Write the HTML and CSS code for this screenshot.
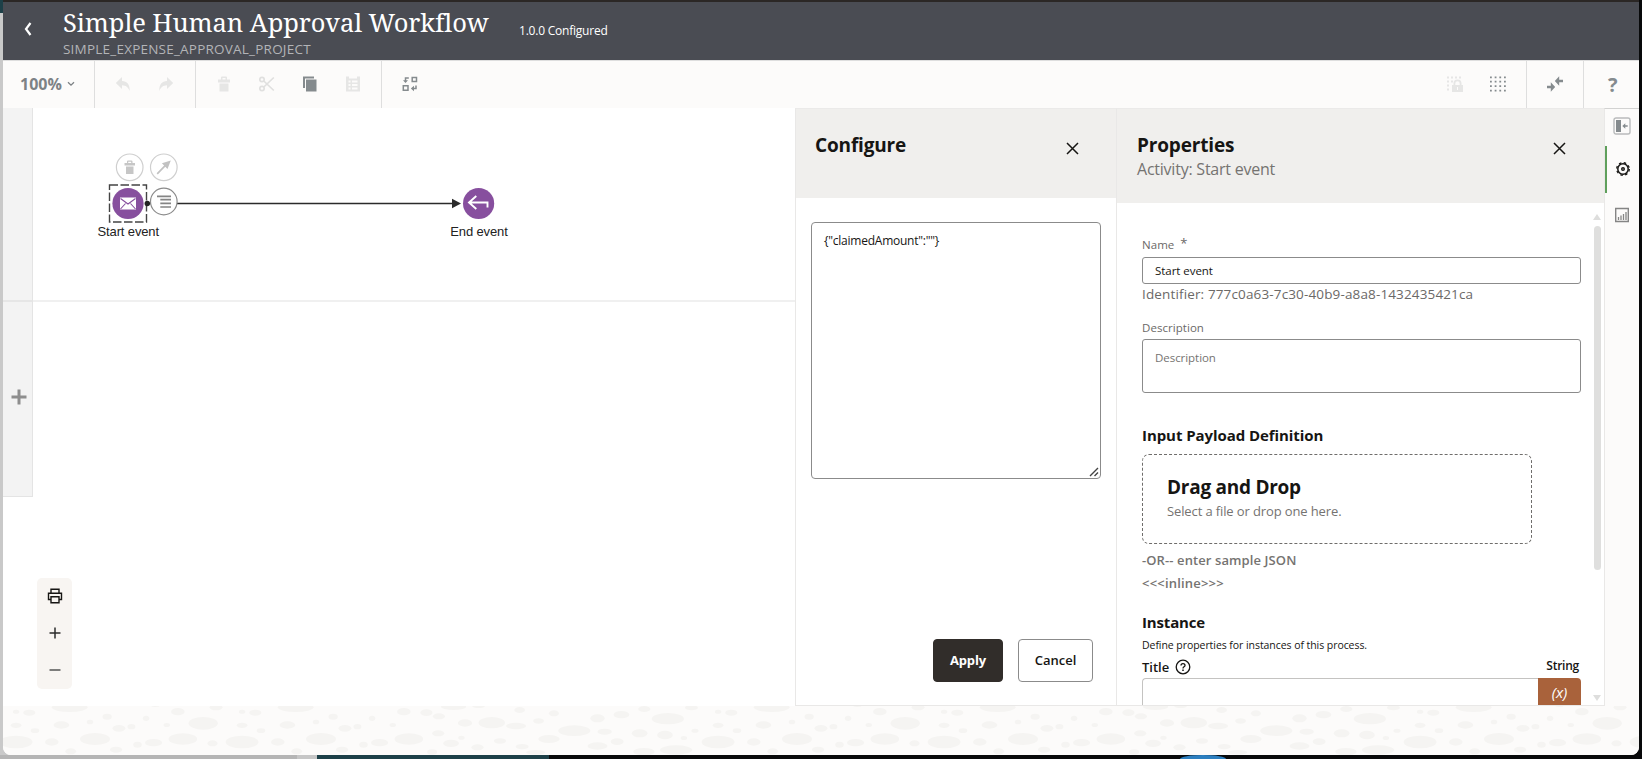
FILE: index.html
```html
<!DOCTYPE html>
<html lang="en">
<head>
<meta charset="utf-8">
<title>Simple Human Approval Workflow</title>
<link rel="stylesheet" href="styles.css">
</head>
<body>
<div class="desktop">
  <div class="window">
    <header class="header">
      <svg class="back" width="10" height="16" viewBox="0 0 10 16"><path d="M7.500 2 3 8l4.500 6" fill="none" stroke="#fff" stroke-width="2.200"/></svg>
      <div class="heading">
        <h1 class="title">Simple Human Approval Workflow</h1>
        <div class="project">SIMPLE_EXPENSE_APPROVAL_PROJECT</div>
      </div>
      <div class="version">1.0.0 Configured</div>
    </header>

    <div class="toolbar">
      <div class="group zoom-group">
        <span class="zoom">100%</span>
        <svg width="8" height="6" viewBox="0 0 8 6"><path d="M1 1.200 4 4.200l3-3" fill="none" stroke="#7d8285" stroke-width="1.300"/></svg>
      </div>
      <div class="group history-group">
        <svg class="off" width="16" height="16" viewBox="0 0 16 16"><path d="M7 1v4c5 .3 8 3.300 7.700 10C13 11 11 9.500 7 9.300V13L.8 7z"/></svg>
        <svg class="off" width="16" height="16" viewBox="0 0 16 16"><path d="M9 1v4C4 5.300 1 8.300 1.300 15 3 11 5 9.500 9 9.300V13l6.200-6z"/></svg>
      </div>
      <div class="group edit-group">
        <svg class="off" width="16" height="16" viewBox="0 0 16 16"><path d="M2 3.500h3V1.300Q5 .5 6 .5h4q1 0 1 .8v2.200h3v3H2zM6.500 2v1.500h3V2zM3.500 7.500h9v8h-9z" fill-rule="evenodd"/></svg>
        <svg class="off-line" width="16" height="16" viewBox="0 0 16 16"><circle cx="3" cy="3.500" r="2.200"/><circle cx="3" cy="12.500" r="2.200"/><path d="m4.800 5 10 9.500M4.800 11l10-9.500"/></svg>
        <svg class="on" width="16" height="16" viewBox="0 0 16 16"><path d="M1 .5h11v2H3V12H1zM4 3.500h10.500v12H4z"/></svg>
        <svg class="off" width="16" height="16" viewBox="0 0 16 16"><path d="M1 .5h3v2h8v-2h3v15H1zM3.500 4.500v2h2v-2zM7 4.500v2h5.500v-2zM3.500 8v2h2V8zM7 8v2h5.500V8zM3.500 11.500v2h2v-2zM7 11.500v2h5.500v-2z" fill-rule="evenodd"/></svg>
      </div>
      <div class="group swap-group">
        <svg width="16" height="16" viewBox="0 0 16 16"><g fill="none" stroke="#858b8e" stroke-width="1.500"><path d="M10.200 1.500h4.300v4h-4.300zM1.300 9.800H6v4.500H1.300zM6.800 2H3.500v3.500M14 9.500v3h-3.500"/></g><path d="M1 4.200h5L3.500 7zM12 9.800v5.400l-3.200-2.700z" fill="#858b8e"/></svg>
      </div>
      <div class="spacer"></div>
      <div class="group grid-group">
        <svg class="off" width="16" height="16" viewBox="0 0 16 16"><path d="M0 .5h2v2H0zM4 .5h2v2H4zM8 .5h2v2H8zM12 .5h2v2h-2zM0 4.500h2v2H0zM4 4.500h2v2H4zM0 8.500h2v2H0zM0 12.500h2v2H0z"/><path d="M5 9h1.500V7.500a4 4 0 0 1 8 0V9H16v7H5zM8.300 9h4.400V7.500a2.200 2.200 0 0 0-4.400 0zM10 11v3h1v-3z" fill-rule="evenodd"/></svg>
        <svg width="16" height="16" viewBox="0 0 16 16"><g stroke="#858b8e" stroke-width="1.800" stroke-dasharray="1.800 2.870"><path d="M0 1.300h16M0 5.700h16M0 10.200h16M0 14.700h16"/></g></svg>
      </div>
      <div class="group collapse-group">
        <svg class="on" width="16" height="16" viewBox="0 0 16 16"><path d="M7.800 5 12.200.3v3.500h3.800v2.400h-3.800v3.500zM8.200 11 3.800 6.300v3.500H0v2.400h3.800v3.500z"/></svg>
      </div>
      <div class="group help-group">?</div>
    </div>

    <main class="workspace">
      <section class="canvas">
        <div class="gutter">
          <div class="lane"></div>
          <div class="lane add-lane"><svg width="16" height="16" viewBox="0 0 16 16"><path d="M8 .5v15M.5 8h15" stroke="#8e8e8e" stroke-width="3"/></svg></div>
        </div>
        <div class="lanes"><div class="lane-body"></div></div>
        <svg class="diagram" width="792" height="190" viewBox="3 108 792 190">
          <path d="M147 203.500h306" stroke="#2b2b2b" stroke-width="1.500"/>
          <path d="m452 198.700 9 4.800-9 4.800z" fill="#2b2b2b"/>
          <rect x="109.500" y="185" width="37" height="37" fill="none" stroke="#444" stroke-width="1.400" stroke-dasharray="8.500 2.500"/>
          <circle cx="128" cy="203.500" r="15.600" fill="#874f9e"/>
          <rect x="120" y="197.500" width="16" height="12" fill="#fff"/>
          <path d="m120.500 198.500 7.500 5.500 7.500-5.500M120.500 209l5-5.500M135.500 209l-5-5.500" fill="none" stroke="#874f9e" stroke-width="1.100"/>
          <circle cx="147.300" cy="203.500" r="2.700" fill="#222"/>
          <g fill="#fff" stroke="#cfcfcf" stroke-width="1.200"><circle cx="129.700" cy="167.300" r="13.300"/><circle cx="163.800" cy="167.300" r="13.300"/><circle cx="163.800" cy="201.500" r="13.300" stroke="#8b8b8b"/></g>
          <path d="M124.500 163h2.500v-1.500q0-1 1-1h3.500q1 0 1 1v1.500h2.500v2.500h-10.500zm3.700-1.300v1.300h3v-1.300zM126 166.500h7.500v7.500H126z" fill="#c6c6c6" fill-rule="evenodd"/>
          <path d="m170.800 160.500-3.300 8.500-2.200-2.300-7.500 7.700-1.200-1.200 7.500-7.600-2.200-2.300z" fill="#c2c2c2"/>
          <path d="M157 196.300h14M160.300 199.700H171M160.300 203.300H171M160.300 207H171" stroke="#858585" stroke-width="1.700"/>
          <circle cx="478.600" cy="203.500" r="15.600" fill="#874f9e"/>
          <path d="m476.300 196-7.300 6.500 7.300 6.500M469.500 202.500h18v5" fill="none" stroke="#fff" stroke-width="1.900"/>
          <text class="node-label" x="128.300" y="236" textLength="61.500">Start event</text>
          <text class="node-label" x="479" y="236" textLength="57.500">End event</text>
        </svg>
        <div class="view-tools">
          <svg width="16" height="16" viewBox="0 0 16 16"><g fill="none" stroke="#161513" stroke-width="1.400"><path d="M4 5V1.300h8V5M4 11.500H1.500V5.200h13v6.300H12M4 8.700h8v6H4z"/></g></svg>
          <svg width="16" height="16" viewBox="0 0 16 16"><path d="M8 2.500v11M2.500 8h11" stroke="#2b2b2b" stroke-width="1.500"/></svg>
          <svg width="16" height="16" viewBox="0 0 16 16"><path d="M2.500 8h11" stroke="#555" stroke-width="1.700"/></svg>
        </div>
      </section>

      <section class="panel configure">
        <div class="panel-head configure-head">
          <h2 class="panel-title">Configure</h2>
          <svg class="close" width="13" height="13" viewBox="0 0 13 13"><path d="m1 1 11 11M12 1 1 12" stroke="#161513" stroke-width="1.500"/></svg>
        </div>
        <div class="payload">{"claimedAmount":""}
          <svg class="grip" width="10" height="10" viewBox="0 0 10 10"><path d="m1 9 8-8M5.500 9 9 5.500" stroke="#444" stroke-width="1.400"/></svg>
        </div>
        <div class="actions">
          <button class="btn primary">Apply</button>
          <button class="btn">Cancel</button>
        </div>
      </section>

      <section class="panel properties">
        <div class="panel-head properties-head">
          <div>
            <h2 class="panel-title">Properties</h2>
            <div class="panel-sub">Activity: Start event</div>
          </div>
          <svg class="close" width="13" height="13" viewBox="0 0 13 13"><path d="m1 1 11 11M12 1 1 12" stroke="#161513" stroke-width="1.500"/></svg>
        </div>
        <div class="props-body">
          <div class="form">
            <div class="label name-label">Name<span class="star">*</span></div>
            <div class="field">Start event</div>
            <div class="identifier">Identifier: 777c0a63-7c30-40b9-a8a8-1432435421ca</div>
            <div class="label desc-label">Description</div>
            <div class="field area">Description</div>
            <h3 class="section payload-section">Input Payload Definition</h3>
            <div class="dropzone">
              <div class="drop-title">Drag and Drop</div>
              <div class="drop-sub">Select a file or drop one here.</div>
            </div>
            <div class="sample">-OR-- enter sample JSON</div>
            <div class="inline-link">&lt;&lt;&lt;inline&gt;&gt;&gt;</div>
            <h3 class="section instance-section">Instance</h3>
            <div class="hint">Define properties for instances of this process.</div>
            <div class="title-row">
              <span class="title-label">Title</span>
              <svg width="16" height="16" viewBox="0 0 16 16"><circle cx="8" cy="8" r="6.800" fill="none" stroke="#161513" stroke-width="1.300"/><path d="M6 6.600c0-2.700 4-2.700 4-.2 0 1.500-2 1.400-2 3" fill="none" stroke="#161513" stroke-width="1.300"/><path d="M7.300 10.500h1.400v1.400H7.300z"/></svg>
              <span class="type">String</span>
            </div>
            <div class="expression"><div class="expression-input"></div><div class="fx">(x)</div></div>
          </div>
          <div class="scrollbar"><i class="up"></i><i class="thumb"></i><i class="down"></i></div>
        </div>
      </section>

      <nav class="rail">
        <div class="rail-item first"><svg width="18" height="18" viewBox="0 0 18 18"><rect x="1" y="1" width="16" height="16" rx="2" fill="none" stroke="#b9bbbc" stroke-width="1.400"/><path d="M3 3h5v12H3z" fill="#858b8e"/><path d="m9.300 9 3-2.700v2h2.400v1.400h-2.400v2z" fill="#858b8e"/></svg></div>
        <div class="rail-item active"><svg width="16" height="16" viewBox="0 0 16 16" fill="none" stroke="#161513"><circle cx="8" cy="8" r="5.200" stroke-width="1.500"/><circle cx="8" cy="8" r="6.300" stroke-width="1.300" stroke-dasharray="2.500 2.450"/><circle cx="8" cy="8" r="1.300" stroke-width="1.400"/></svg></div>
        <div class="rail-item chart"><svg width="16" height="16" viewBox="0 0 16 16" fill="none" stroke="#858585"><path d="M1.700 1.500h12.600v13H1.700z" stroke-width="1.400"/><path d="M4.500 13V10M7 13V8.500M9.500 13V7M12 13V5" stroke-width="1.300"/></svg></div>
      </nav>
    </main>

    <footer class="footer">
      <svg width="1636" height="49" viewBox="3 0 1636 49">
        <defs>
          <g id="stones-b" transform="scale(.35714 .33333) translate(0 -438)">
            <ellipse cx="195" cy="442" rx="50" ry="14"/><ellipse cx="300" cy="470" rx="13" ry="9"/><ellipse cx="252" cy="486" rx="9" ry="7"/><ellipse cx="45" cy="455" rx="9" ry="6"/><ellipse cx="82" cy="458" rx="17" ry="9"/><ellipse cx="45" cy="496" rx="15" ry="8"/><ellipse cx="98" cy="512" rx="12" ry="7"/><ellipse cx="172" cy="495" rx="22" ry="11"/><ellipse cx="45" cy="546" rx="46" ry="19"/><ellipse cx="145" cy="546" rx="19" ry="11"/><ellipse cx="266" cy="537" rx="42" ry="18"/><ellipse cx="333" cy="505" rx="18" ry="10"/><ellipse cx="368" cy="500" rx="11" ry="8"/><ellipse cx="409" cy="475" rx="9" ry="8"/><ellipse cx="385" cy="554" rx="12" ry="9"/><ellipse cx="430" cy="548" rx="24" ry="11"/><ellipse cx="325" cy="569" rx="17" ry="9"/><ellipse cx="198" cy="574" rx="15" ry="9"/><ellipse cx="467" cy="495" rx="9" ry="6"/><ellipse cx="512" cy="537" rx="40" ry="17"/><ellipse cx="498" cy="455" rx="19" ry="11"/>
          </g>
          <g id="stones-a"><use href="#stones-b"/>
            <g transform="scale(.35714 .33333) translate(0 -438)"><ellipse cx="569" cy="490" rx="41" ry="19"/><ellipse cx="595" cy="550" rx="14" ry="9"/><ellipse cx="605" cy="442" rx="18" ry="9"/><ellipse cx="435" cy="437" rx="12" ry="4"/></g>
          </g>
          <g id="stones-c" transform="scale(.35714 .33333) translate(0 -438)">
            <ellipse cx="1194" cy="458" rx="17" ry="10"/><ellipse cx="1229" cy="469" rx="17" ry="9"/><ellipse cx="1270" cy="440" rx="35" ry="10"/><ellipse cx="1340" cy="438" rx="18" ry="6"/><ellipse cx="1302" cy="489" rx="20" ry="11"/><ellipse cx="1377" cy="488" rx="37" ry="17"/><ellipse cx="1445" cy="498" rx="28" ry="10"/><ellipse cx="1455" cy="450" rx="15" ry="9"/><ellipse cx="1508" cy="483" rx="15" ry="8"/><ellipse cx="1551" cy="460" rx="14" ry="9"/><ellipse cx="1227" cy="520" rx="17" ry="9"/><ellipse cx="1263" cy="550" rx="22" ry="11"/><ellipse cx="1292" cy="533" rx="9" ry="6"/><ellipse cx="1337" cy="562" rx="17" ry="9"/><ellipse cx="1400" cy="543" rx="17" ry="8"/><ellipse cx="1462" cy="560" rx="18" ry="8"/><ellipse cx="1537" cy="537" rx="30" ry="12"/><ellipse cx="1210" cy="576" rx="14" ry="8"/><ellipse cx="1500" cy="577" rx="27" ry="7"/><ellipse cx="1673" cy="475" rx="20" ry="12"/><ellipse cx="1740" cy="464" rx="22" ry="11"/><ellipse cx="1804" cy="447" rx="17" ry="9"/><ellipse cx="1870" cy="476" rx="45" ry="17"/><ellipse cx="1608" cy="512" rx="45" ry="16"/><ellipse cx="1693" cy="515" rx="20" ry="9"/><ellipse cx="1728" cy="545" rx="18" ry="10"/><ellipse cx="1673" cy="558" rx="28" ry="11"/><ellipse cx="1791" cy="520" rx="22" ry="12"/><ellipse cx="1862" cy="525" rx="22" ry="13"/><ellipse cx="1915" cy="534" rx="9" ry="6"/><ellipse cx="1893" cy="570" rx="45" ry="14"/><ellipse cx="1803" cy="575" rx="30" ry="11"/><ellipse cx="1936" cy="443" rx="18" ry="8"/><ellipse cx="1946" cy="512" rx="10" ry="6"/>
          </g>
          <g id="stones"><use href="#stones-a"/><use href="#stones-b" x="226"/><use href="#stones-c"/></g>
        </defs>
        <g fill="#f5f4f2"><use href="#stones"/><use href="#stones" x="702"/><use href="#stones" x="1404"/></g>
      </svg>
    </footer>
  </div>
  <div class="taskbar"><div class="task-grey"></div><div class="task-light"></div><div class="task-teal"></div><div class="globe"></div></div>
</div>
</body>
</html>
```
FILE: styles.css
```css
* { box-sizing: border-box; }
body { margin: 0; background: #08090a; color: #161513; font-family: "Open Sans", "Noto Sans", sans-serif; }
h1, h2, h3 { margin: 0; }
svg { display: block; flex: none; }

.desktop { width: 1642px; height: 759px; overflow: hidden; padding-left: 3px; background: linear-gradient(#1d4048 13px, #c9c9c9 13px) 0 0 / 12px 100% no-repeat #08090a; }
.window { width: 1636px; height: 755px; display: flex; flex-direction: column; overflow: hidden; border-top: 2px solid #2b2725; border-radius: 0 0 8px 8px; background: #fff; }

.header { height: 58px; flex: none; display: flex; background: #4a4c53; color: #fff; }
.back { margin: 19px 0 0 20px; }
.heading { width: 456px; margin-left: 30px; }
.title { margin-top: 2px; font: 400 25.5px/36px "Noto Serif", serif; letter-spacing: -.09px; white-space: nowrap; }
.project { font-size: 13.5px; line-height: 18px; letter-spacing: .22px; color: #b3b4b7; }
.version { margin-top: 20px; font-size: 12px; line-height: 18px; letter-spacing: -.22px; }

.toolbar { height: 48px; flex: none; display: flex; border-top: 1px solid #dedede; background: #fcfbfa; }
.group { display: flex; align-items: center; padding-bottom: 1px; }
.group + .group { border-left: 1px solid #dedede; }
.zoom-group { width: 91px; padding-left: 17px; gap: 5px; }
.zoom { font-size: 16px; font-weight: 700; color: #7d8285; }
.history-group { width: 101px; padding-left: 20px; gap: 27px; }
.edit-group { width: 186px; padding-left: 20px; gap: 27px; }
.swap-group { padding-left: 20px; }
.spacer { flex: 1; }
.grid-group { width: 79px; gap: 27px; }
.collapse-group { width: 57px; padding-left: 20px; }
.help-group { width: 56px; padding-left: 24px; font-size: 20px; font-weight: 700; color: #858b8e; }
.on { fill: #858b8e; }
.off { fill: #e6e6e5; }
.off-line { fill: none; stroke: #e0e0df; stroke-width: 1.7; }

.workspace { height: 598px; flex: none; display: flex; }
.canvas { position: relative; width: 792px; display: flex; }
.gutter { width: 30px; height: 389px; border-right: 1px solid #e4e4e4; border-bottom: 1px solid #e4e4e4; background: #f3f3f3; }
.lane { height: 194px; border-bottom: 2px solid #e6e6e6; }
.add-lane { height: 193px; border: 0; padding: 87px 0 0 8px; }
.lanes { flex: 1; }
.lane-body { height: 194px; border-bottom: 2px solid #f0f0f0; }
.diagram { position: absolute; left: 0; top: 0; }
.node-label { font: 13px "Liberation Sans", Arial, sans-serif; fill: #222; text-anchor: middle; }
.view-tools { position: absolute; left: 34px; top: 470px; width: 35px; height: 111px; padding: 10px 0 0 10px; display: flex; flex-direction: column; gap: 21px; border-radius: 5px; background: #f8f5f2; }

.panel { border-left: 1px solid #e9e8e7; border-bottom: 1px solid #e9e8e7; border-top: 1px solid #ebeae9; background: #fff; }
.configure { width: 321px; display: flex; flex-direction: column; }
.panel-head { display: flex; justify-content: space-between; background: #f0efed; }
.configure-head { height: 89px; padding: 21px 37px 0 19px; }
.panel-title { font-size: 19px; line-height: 30px; letter-spacing: -.16px; font-weight: 700; }
.close { margin-top: 12px; }
.payload { position: relative; width: 290px; height: 257px; margin: 24px 0 0 15px; padding: 9px 12px; border: 1px solid #8b8b8b; border-radius: 4px; font-size: 12px; line-height: 17px; letter-spacing: -.24px; }
.grip { position: absolute; right: 1px; bottom: 1px; }
.actions { margin: 160px 0 0 137px; display: flex; gap: 15px; }
.btn { height: 43px; width: 75px; padding: 0 0 2px; border: 1px solid #8b8b8b; border-radius: 4px; background: #fff; color: #161513; font: 600 13px "Open Sans", sans-serif; }
.btn.primary { width: 70px; border-color: #312d2a; background: #312d2a; color: #fff; font-weight: 700; letter-spacing: -.15px; }

.properties { width: 488px; display: flex; flex-direction: column; }
.properties-head { height: 94px; flex: none; padding: 21px 38px 0 20px; }
.panel-sub { margin-top: -4px; font-size: 16px; line-height: 26px; letter-spacing: -.23px; color: #757371; }
.props-body { flex: 1; min-height: 0; display: flex; overflow: hidden; }
.form { width: 464px; padding-left: 25px; }
.label { font-size: 11.5px; line-height: 16px; font-weight: 500; letter-spacing: .05px; color: #6b6967; }
.name-label { display: flex; margin-top: 34px; }
.star { margin: -2px 0 0 6px; font-size: 13px; }
.field { width: 439px; height: 27px; margin-top: 4px; padding: 4px 12px; border: 1px solid #8b8b8b; border-radius: 3px; font-size: 11.5px; line-height: 18px; letter-spacing: -.05px; }
.identifier { font-size: 13.5px; line-height: 20px; letter-spacing: .14px; color: #6b6967; white-space: nowrap; }
.desc-label { margin-top: 16px; }
.field.area { height: 54px; margin-top: 3px; padding-top: 9px; color: #757371; }
.section { font-size: 15px; line-height: 24px; font-weight: 700; letter-spacing: -.07px; }
.payload-section { margin-top: 30px; }
.dropzone { width: 390px; height: 90px; margin-top: 7px; padding: 18px 24px; border: 1px dashed #6f6d6b; border-radius: 7px; }
.drop-title { font-size: 19px; line-height: 28px; letter-spacing: -.26px; font-weight: 700; }
.drop-sub { font-size: 13px; line-height: 20px; letter-spacing: -.12px; color: #757371; }
.sample, .inline-link { font-size: 13px; line-height: 22px; font-weight: 600; letter-spacing: .1px; color: #757371; }
.sample { margin-top: 5px; }
.inline-link { margin-top: 1px; letter-spacing: .2px; }
.instance-section { margin-top: 16px; letter-spacing: -.16px; }
.hint { margin-top: 2px; font-size: 10.5px; line-height: 18px; letter-spacing: -.06px; }
.title-row { display: flex; align-items: center; width: 437px; height: 22px; font-size: 13px; font-weight: 600; margin-top: 2px; }
.title-row svg { margin-left: 6px; }
.type { margin-left: auto; font-size: 12px; line-height: 18px; letter-spacing: -.25px; padding-bottom: 2px; }
.expression { display: flex; width: 439px; height: 40px; }
.expression-input { flex: 1; border: 1px solid #c4c3c1; border-right: 0; border-radius: 4px 0 0 4px; }
.fx { width: 43px; padding-top: 3px; border-radius: 0 4px 4px 0; background: #a9623b; color: #fff; font-size: 15px; line-height: 22px; font-style: italic; font-weight: 500; text-align: center; }

.scrollbar { width: 22px; display: flex; flex-direction: column; align-items: center; padding: 11px 0 4px 10px; }
.up, .down { width: 0; height: 0; border: 4px solid transparent; }
.up { border-top: 0; border-bottom: 6px solid #dededd; }
.down { margin-top: auto; border-bottom: 0; border-top: 6px solid #dededd; }
.thumb { width: 7px; height: 344px; margin-top: 6px; border-radius: 4px; background: #dfdfde; }

.rail { width: 35px; border-left: 1px solid #e9e8e7; border-top: 1px solid #d2d2d1; background: #fcfbfa; }
.rail-item { height: 47px; display: flex; align-items: center; padding-left: 10px; }
.rail-item.first { height: 37px; padding: 0 0 3px 8px; }
.rail-item.active { border-left: 2px solid #5f9f5b; padding: 0 0 2px 8px; }
.rail-item.chart { padding: 0 0 4px 9px; }

.footer { height: 49px; flex: none; background: #fcfbfa; }
.taskbar { position: relative; display: flex; height: 4px; margin-left: -3px; background: #08090a; }
.task-grey { width: 297px; background: #b5b5b5; }
.task-light { width: 20px; background: #c6c6c6; }
.task-teal { width: 232px; background: #1d4048; }
.globe { position: absolute; left: 1180px; bottom: 0; width: 46px; height: 4px; border-radius: 50% 50% 0 0 / 100% 100% 0 0; background: #2c7fc0; }
```
